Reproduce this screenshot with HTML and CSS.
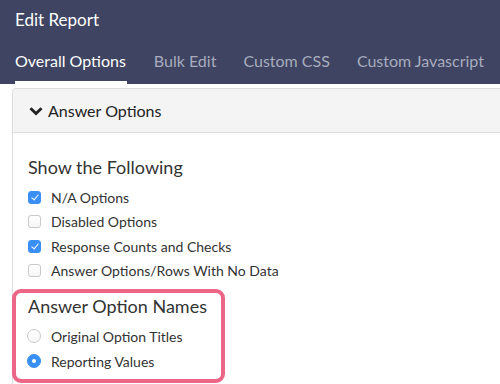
FILE: index.html
```html
<!DOCTYPE html>
<html lang="en">
<head>
  <meta charset="UTF-8">
  <title>Edit Report</title>
  <link rel="stylesheet" href="styles.css">
</head>
<body>

<header class="topbar">
  <div class="topbar-title">Edit Report</div>
  <nav class="tabs">
    <a class="tab active">Overall Options</a>
    <a class="tab">Bulk Edit</a>
    <a class="tab">Custom CSS</a>
    <a class="tab">Custom Javascript</a>
  </nav>
</header>

<main class="content">
  <div class="panel">
    <div class="panel-heading">
      <svg class="chevron" width="14" height="10" viewBox="0 0 14 10">
        <path d="M1.5 2.2 L7 7.6 L12.5 2.2" fill="none" stroke="#222" stroke-width="2.8"/>
      </svg>
      Answer Options
    </div>

    <div class="panel-body">
      <h3 class="group-title">Show the Following</h3>
      <div class="option-list">
        <label class="option"><span class="checkbox checked"></span>N/A Options</label>
        <label class="option"><span class="checkbox"></span>Disabled Options</label>
        <label class="option"><span class="checkbox checked"></span>Response Counts and Checks</label>
        <label class="option"><span class="checkbox"></span>Answer Options/Rows With No Data</label>
      </div>

      <div class="highlight">
        <h3 class="group-title">Answer Option Names</h3>
        <div class="option-list radios">
          <label class="option"><span class="radio"></span>Original Option Titles</label>
          <label class="option"><span class="radio checked"></span>Reporting Values</label>
        </div>
      </div>
    </div>
  </div>
</main>

</body>
</html>
```

FILE: styles.css
```css
* {
  box-sizing: border-box;
}

html, body {
  margin: 0;
  padding: 0;
  width: 100%;
  height: 100%;
  overflow: hidden;
  font-family: Lato, "Open Sans", sans-serif;
  color: #333;
  background: white;
}

.topbar {
  background: #3e4461;
  height: 84px;
  padding: 0 15px;
  display: flex;
  flex-direction: column;
}

.topbar-title {
  color: white;
  font-size: 17px;
  line-height: 40px;
}

.tabs {
  display: flex;
  gap: 27px;
  white-space: nowrap;
}

.tab {
  flex-shrink: 0;
  font-size: 16px;
  line-height: 22px;
  padding: 10px 0 9px;
  color: #a7acbf;
  border-bottom: 3px solid transparent;
  cursor: pointer;
}

.tab.active {
  color: white;
  border-bottom-color: white;
  padding-right: 1px;
}

.content {
  padding-top: 4px;
}

.panel {
  margin-left: 12px;
  margin-right: -10px;
  border: 1px solid #ddd;
  border-bottom: none;
  border-radius: 4px 4px 0 0;
  height: 296px;
}

.panel-heading {
  background: #f4f4f4;
  border-bottom: 1px solid #ddd;
  border-radius: 4px 4px 0 0;
  height: 44px;
  padding: 0 16px;
  display: flex;
  align-items: center;
  gap: 5px;
  font-size: 16px;
  color: #222;
}

.chevron {
  margin-top: 1px;
}

.panel-body {
  padding: 23px 15px 0;
}

.group-title {
  margin: 0;
  font-size: 18px;
  font-weight: normal;
  line-height: 22px;
  color: #333;
}

.option-list {
  margin-top: 7px;
  display: flex;
  flex-direction: column;
}

.option {
  height: 24.5px;
  display: flex;
  align-items: center;
  gap: 10px;
  font-size: 14px;
  color: #333;
}

.checkbox {
  width: 13px;
  height: 13px;
  border: 1px solid #c9c9c9;
  border-radius: 3px;
  background: linear-gradient(#fff, #f6f6f6);
  display: flex;
  align-items: center;
  justify-content: center;
}

.checkbox.checked {
  background: #3a8ff4;
  border-color: #3a8ff4;
}

.checkbox.checked::after {
  content: "";
  width: 3px;
  height: 6px;
  border: solid white;
  border-width: 0 1.6px 1.6px 0;
  transform: rotate(40deg);
  margin-top: -2px;
}

.highlight {
  width: fit-content;
  margin-left: -16px;
  margin-top: 6px;
  border: 4px solid #ec6787;
  border-radius: 9px;
  padding: 2px 14px 5px 12px;
}

.radios {
  margin-top: 7px;
  gap: 0.5px;
}

.radio {
  width: 14px;
  height: 14px;
  border: 1px solid #c9c9c9;
  border-radius: 50%;
  background: linear-gradient(#fff, #f6f6f6);
  margin-left: -1px;
  display: flex;
  align-items: center;
  justify-content: center;
}

.radio.checked {
  background: #3a8ff4;
  border-color: #3a8ff4;
}

.radio.checked::after {
  content: "";
  width: 4px;
  height: 4px;
  border-radius: 50%;
  background: white;
}
```
